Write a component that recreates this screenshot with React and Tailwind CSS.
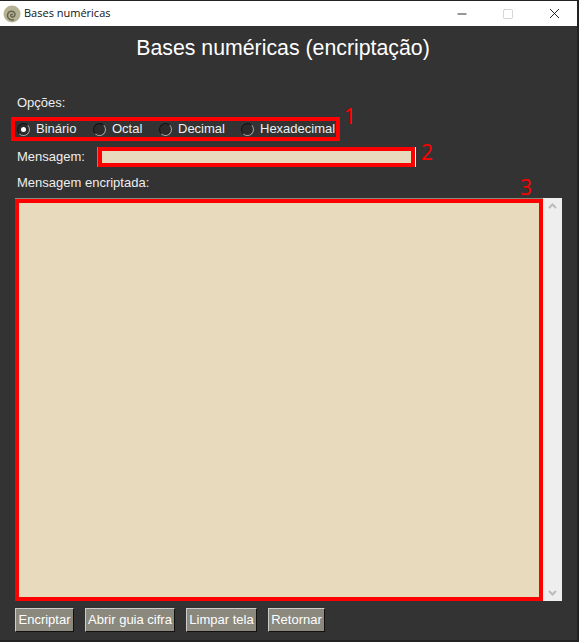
import { Minus, Square, X } from "lucide-react";

const radios = [
  { label: "Binário", checked: true, width: "w-[76px]" },
  { label: "Octal", width: "w-[66px]" },
  { label: "Decimal", width: "w-[82px]" },
  { label: "Hexadecimal", width: "" },
];

const buttons = [
  { label: "Encriptar", width: "w-[59px]" },
  { label: "Abrir guia cifra", width: "w-[90px]" },
  { label: "Limpar tela", width: "w-[71px]" },
  { label: "Retornar", width: "w-[57px]" },
];

function Radio({ checked }) {
  return (
    <span className="w-[13px] h-[13px] rounded-full bg-[#2a2a2a] border border-[#111] border-r-[#aaa] border-b-[#aaa] flex items-center justify-center shrink-0">
      {checked && <span className="w-[5px] h-[5px] rounded-full bg-white" />}
    </span>
  );
}

function Note({ className, children }) {
  return <span className={`absolute text-[#f00] text-[21px] leading-none font-['Open_Sans',sans-serif] ${className}`}>{children}</span>;
}

export default function App() {
  return (
    <div className="relative w-[579px] h-[642px] bg-[#333333] border-t border-r-2 border-b-2 border-[#222] font-['Liberation_Sans',Arial,sans-serif] text-[13px] text-[#eeeeee] overflow-hidden">
      {/* barra de titulo */}
      <div className="h-[25px] bg-white flex items-center pl-[3px] text-[#111] font-['Open_Sans','Noto_Sans',sans-serif]">
        <svg width="18" height="18" viewBox="0 0 18 18" fill="none" className="mr-[3px]">
          <circle cx="9" cy="9" r="8.500" fill="#b5b393" />
          <path d="M9.500 9.500c-.8-1-2.300.2-1.600 1.600.9 1.500 3.500 1.100 4-.9.600-2.400-1.700-4.500-4.200-3.900-2.900.7-4 3.900-2.700 6.300 1.200 2 3.500 2.800 5.600 2.300" stroke="#66664f" strokeWidth="1.500" strokeLinecap="round" />
        </svg>
        <span className="text-[11px]">Bases numéricas</span>
        <div className="ml-auto flex items-center text-[#111]">
          <span className="w-[46px] flex justify-center"><Minus size={14} strokeWidth={1.500} /></span>
          <span className="w-[46px] flex justify-center text-[#bbb]"><Square size={12} strokeWidth={1.200} /></span>
          <span className="w-[46px] flex justify-center"><X size={17} strokeWidth={1.300} /></span>
        </div>
      </div>

      <h1 className="text-[21.300px] leading-[24px] text-center text-white mt-[10px] pr-[11px]">Bases numéricas (encriptação)</h1>

      <div className="mt-[36px] pl-[15px]">
        <p className="pl-[2px] leading-[14px]">Opções:</p>

        <div className="-ml-[4px] mt-[7px] w-[329px] h-[24px] border-4 border-[#f00] flex items-center pl-[2px]">
          {radios.map((r) => (
            <div key={r.label} className={`flex items-center gap-[6px] ${r.width}`}>
              <Radio checked={r.checked} />
              <span>{r.label}</span>
            </div>
          ))}
        </div>

        <div className="flex items-center mt-[6px] h-[20px]">
          <span className="pl-[2px] w-[82px]">Mensagem:</span>
          <div className="w-[319px] h-[20px] border-l border-r border-[#888] border-r-white">
            <div className="h-full border-4 border-[#f00] bg-[#e8dabd]" />
          </div>
        </div>

        <p className="pl-[2px] mt-[9px] leading-[14px]">Mensagem encriptada:</p>

        <div className="flex mt-[8px] h-[403px]">
          <div className="w-[528px] border-t border-[#8a8a78]">
            <div className="h-full border-4 border-[#f00] bg-[#e8dabd]" />
          </div>
          <div className="w-[19px] bg-[#eeeeee] flex flex-col justify-between items-center py-[5px] text-[#bbb]">
            <svg width="9" height="6" viewBox="0 0 9 6" fill="none" stroke="currentColor" strokeWidth="2"><path d="M1 5l3.500-3.500L8 5" /></svg>
            <svg width="9" height="6" viewBox="0 0 9 6" fill="none" stroke="currentColor" strokeWidth="2"><path d="M1 1l3.500 3.500L8 1" /></svg>
          </div>
        </div>

        <div className="flex gap-[11px] mt-[7px]">
          {buttons.map((b) => (
            <button
              key={b.label}
              className={`h-[24px] ${b.width} bg-[#8b887e] text-white text-[13px] whitespace-nowrap border border-[#ccc] border-r-[#111] border-b-[#111]`}
            >
              {b.label}
            </button>
          ))}
        </div>
      </div>

      <Note className="left-[344px] top-[105px]">1</Note>
      <Note className="left-[421px] top-[141px]">2</Note>
      <Note className="left-[520px] top-[176px]">3</Note>
    </div>
  );
}
